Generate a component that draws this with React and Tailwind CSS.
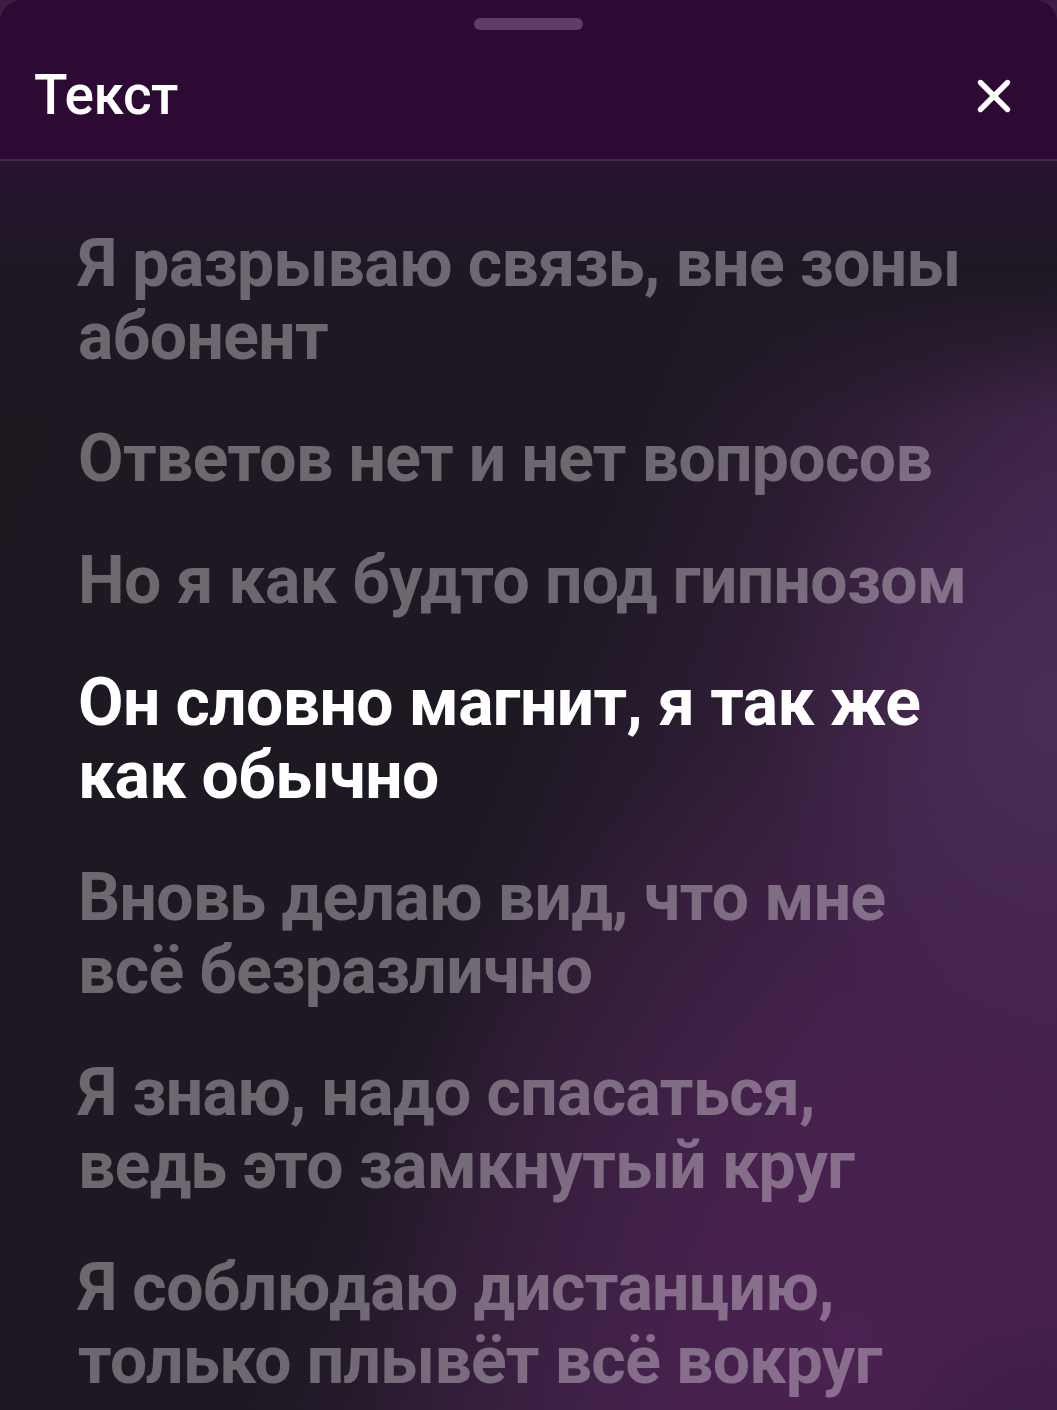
import { X } from "lucide-react";

const lyrics = [
	{ text: "Я разрываю связь, вне зоны абонент" },
	{ text: "Ответов нет и нет вопросов" },
	{ text: "Но я как будто под гипнозом" },
	{ text: "Он словно магнит, я так же как обычно", active: true },
	{ text: "Вновь делаю вид, что мне всё безразлично" },
	{ text: "Я знаю, надо спасаться, ведь это замкнутый круг" },
	{ text: "Я соблюдаю дистанцию, только плывёт всё вокруг" },
];

const App = () => {
	return (
		<div className="h-[1410px] w-[1057px] overflow-hidden bg-[#3a1d42] font-['Roboto',sans-serif]">
			<div className="flex h-full flex-col overflow-hidden rounded-t-[22px] bg-[#2d0a33]">
				{/* Header */}
				<div className="flex h-[161px] shrink-0 flex-col border-b-2 border-[#45264f]">
					<div className="flex justify-center pt-[18px]">
						<div className="h-[12px] w-[109px] rounded-full bg-[#5b3d68]" />
					</div>
					<div className="flex items-center justify-between pl-[34px] pr-[36px] pt-[38px]">
						<h1 className="text-[55px] font-medium leading-none tracking-[-0.5px] text-white">
							Текст
						</h1>
						<X className="h-[54px] w-[54px] text-white" strokeWidth={2.4} />
					</div>
				</div>

				{/* Lyrics */}
				<div className="relative flex-1 bg-[radial-gradient(ellipse_420px_520px_at_100%_44%,#4b2c56_0%,transparent_70%),radial-gradient(ellipse_700px_900px_at_80%_95%,#4a2150_0%,transparent_70%),linear-gradient(180deg,#271333_0px,#1e1823_110px,transparent_260px),linear-gradient(112deg,#1d1820_0%,#1e1823_48%,#3d2246_75%,#46234e_100%)]">
					<div className="pointer-events-none absolute right-[-120px] top-[1180px] h-[260px] w-[260px] rounded-full bg-[#3b1e44]/70 blur-[30px]" />
					<div className="relative flex flex-col gap-[49px] pl-[78px] pr-[79px] pt-[66px]">
						{lyrics.map((line) => (
							<p
								key={line.text}
								className={
									line.active
										? "text-[66px] font-bold leading-[73px] tracking-[-0.6px] text-white"
										: "text-[66px] font-bold leading-[73px] tracking-[-0.6px] text-white/35"
								}
							>
								{line.text}
							</p>
						))}
					</div>
				</div>
			</div>
		</div>
	);
};

export default App;
